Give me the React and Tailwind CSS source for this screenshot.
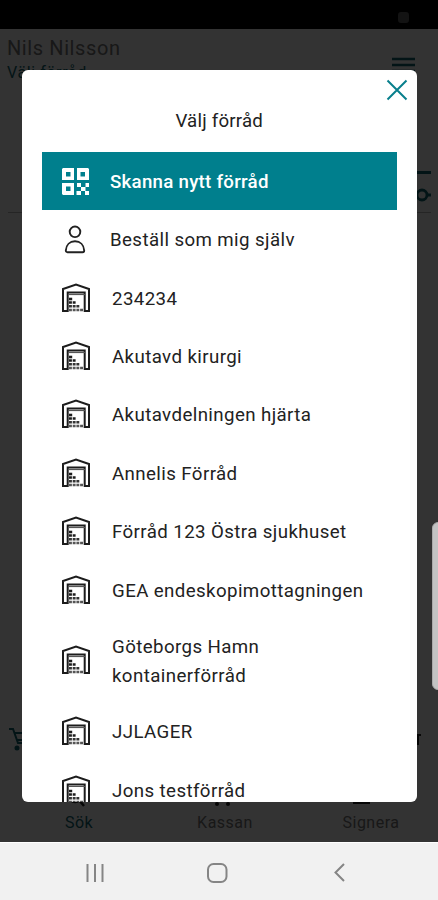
import React from 'react';

const storages = [
  '234234',
  'Akutavd kirurgi',
  'Akutavdelningen hjärta',
  'Annelis Förråd',
  'Förråd 123 Östra sjukhuset',
  'GEA endeskopimottagningen',
  'Göteborgs Hamn kontainerförråd',
  'JJLAGER',
  'Jons testförråd',
];

// --- ICONS ---
const StorageIcon = () => (
  <svg className="w-[30px] h-[30px] shrink-0" viewBox="0 0 30 30" fill="none" stroke="#1c1c1c">
    <path d="M2 28V6L15 1.500l13 4.500v22h-4.300V9.500H6.700V28z" strokeWidth="2" />
    <path d="M7 11.500h17" strokeWidth="1.200" stroke="#555" />
    <path d="M8 16h3.200" strokeWidth="2.600" />
    <path d="M8 19.600h6.600" strokeWidth="2.500" strokeDasharray="2.900 0.800" />
    <path d="M8 23.200h10.300" strokeWidth="2.500" stroke="#333" strokeDasharray="2.900 0.800" />
    <path d="M8 27h14" strokeWidth="2.600" stroke="#555" strokeDasharray="2.900 0.800" />
  </svg>
);

const PersonIcon = () => (
  <svg className="w-[22px] h-[29px] shrink-0" viewBox="0 0 22 29" fill="none" stroke="#222" strokeWidth="1.9">
    <circle cx="11" cy="6.800" r="5.300" />
    <path d="M1.800 25.500c.3-5.600 4-9.200 9.200-9.200s8.900 3.600 9.200 9.200c0 1-.6 1.700-1.600 1.700H3.400c-1 0-1.600-.7-1.600-1.700z" />
  </svg>
);

const QrIcon = () => (
  <svg className="w-[27px] h-[27px] shrink-0" viewBox="0 0 27 27" fill="#fff">
    <path fillRule="evenodd" d="M1 0h11v12H0V1zM4 4v4.500h4.500V4zM15 0h11l1 1v11H15zM18.500 4v4.500H23V4zM0 15h12v12H1l-1-1zM4 18.500V23h4.500v-4.500z" />
    <path d="M15 15h4v4h-4zM19 19h4.500v4H19zM23.500 15H27v4h-3.500zM14.500 23h4.500v4h-4.500zM23 23h4v4h-4z" />
  </svg>
);

// --- PAGE BEHIND THE DIALOG ---
const Page = () => (
  <div className="h-[813px] bg-white flex flex-col">
    <header className="flex justify-between pl-[7px] pr-[23px] pt-[7px]">
      <div>
        <h1 className="text-[20px] leading-6 tracking-[0.6px] text-[#777]">Nils Nilsson</h1>
        <p className="text-[16px] leading-[26px] tracking-[0.6px] text-[#0f6670]">Välj förråd</p>
      </div>
      <svg className="w-6 h-6 mt-[19px]" viewBox="0 0 24 24" stroke="#0f6670" strokeWidth="2.500">
        <path d="M1 4h23M1 10h23M1 16h23" />
      </svg>
    </header>
    <div className="mt-[77px] ml-2 flex justify-end border-b border-[#bbb] h-[50px] w-[423px]">
      <svg className="w-9 h-10" viewBox="0 0 36 40" fill="none" stroke="#0f6670" strokeWidth="2.800">
        <path d="M4 9.500h32M4 32h18M33 32h3" />
        <circle cx="27" cy="32" r="5" />
      </svg>
    </div>
    <div className="mt-auto flex justify-between pl-[9px] pr-[16px] pb-[34px]">
      <svg className="w-6 h-6" viewBox="0 0 24 24" fill="none" stroke="#0f6670" strokeWidth="2">
        <path d="M0 2h4l5 14h12M5 6h17l-2 7H8" />
        <circle cx="8" cy="21" r="1.500" fill="#0f6670" />
        <circle cx="19" cy="21" r="1.500" fill="#0f6670" />
      </svg>
      <svg className="w-4 h-6" viewBox="0 0 16 24" fill="none" stroke="#222" strokeWidth="2">
        <path d="M3 8h12M12 8v10" />
      </svg>
    </div>
    <nav className="grid grid-cols-3 ml-[6px] -mr-[6px] pb-[8px] text-center text-[16px] leading-[22px] tracking-[0.5px] text-[#777]">
      <div className="flex flex-col items-center text-[#0f6670]">
        <svg className="w-6 h-6 mb-[3px]" viewBox="0 0 24 24" fill="none" stroke="#222" strokeWidth="2.500">
          <circle cx="8" cy="11" r="6" />
          <path d="M12 15l5 6" />
        </svg>
        Sök
      </div>
      <div className="flex flex-col items-center">
        <svg className="w-6 h-6 mb-[3px]" viewBox="0 0 24 24" fill="#222">
          <circle cx="4" cy="19" r="2" />
          <circle cx="15" cy="19" r="2" />
        </svg>
        Kassan
      </div>
      <div className="flex flex-col items-center">
        <svg className="w-6 h-6 mb-[3px] overflow-visible" viewBox="0 0 24 24" fill="none" stroke="#222" strokeWidth="2">
          <path d="M-6 18h17" />
        </svg>
        Signera
      </div>
    </nav>
  </div>
);

// --- STORAGE PICKER ---
const StorageDialog = () => (
  <div className="absolute left-[22px] top-[70px] w-[394.500px] h-[731.500px] rounded-[6px] bg-white overflow-hidden px-5 text-[18.7px] leading-[29px] tracking-[0.4px] text-[#222]">
    <button className="absolute right-[9px] top-[9px]" aria-label="Stäng">
      <svg className="w-[22px] h-[22px]" viewBox="0 0 22 22" stroke="#087f8c" strokeWidth="2">
        <path d="M1.500 1.500l19 19M20.500 1.500l-19 19" />
      </svg>
    </button>
    <h2 className="pt-[37px] pb-[16px] text-center tracking-[0.2px]">Välj förråd</h2>
    <ul>
      <li className="h-[58px] flex items-center pl-5 bg-[#007f8d] text-white font-medium tracking-[0.26px]">
        <QrIcon />
        <span className="ml-[21px] pt-[2px]">Skanna nytt förråd</span>
      </li>
      <li className="h-[58.4px] flex items-center pl-[22px]">
        <PersonIcon />
        <span className="ml-[24px] pt-[2px]">Beställ som mig själv</span>
      </li>
      {storages.map((name) => (
        <li key={name} className="min-h-[58.4px] py-[11.100px] flex items-center pl-[19px]">
          <StorageIcon />
          <span className="ml-[21px] pt-[3px] max-w-[256px]">{name}</span>
        </li>
      ))}
    </ul>
  </div>
);

const App = () => (
  <div className="relative w-[438px] h-[900px] overflow-hidden bg-[#f1f1f1] font-['Roboto',sans-serif]">
    <div className="h-[29px] bg-black flex justify-end pr-[29px] pt-[12px]">
      <div className="w-[11px] h-[11px] rounded-[3px] bg-[#131313]" />
    </div>
    <div className="relative">
      <Page />
      <div className="absolute inset-0 bg-black/80" />
    </div>

    {/* system navigation */}
    <div className="h-[58px] border-t border-white">
      <svg className="w-[438px] h-[57px]" viewBox="0 0 438 57" fill="none" stroke="#858585" strokeWidth="2">
        <path d="M87.500 21v18M95 21v18M102.500 21v18" />
        <rect x="208" y="21" width="18.500" height="18" rx="5.500" />
        <path d="M344 21l-8.500 8.500 8.500 8.500" />
      </svg>
    </div>

    <StorageDialog />
    <div className="absolute left-[432px] top-[522px] w-3 h-[168px] rounded-[6px] bg-[#c3c3c3] border border-[#aaa]" />
  </div>
);

export default App;
